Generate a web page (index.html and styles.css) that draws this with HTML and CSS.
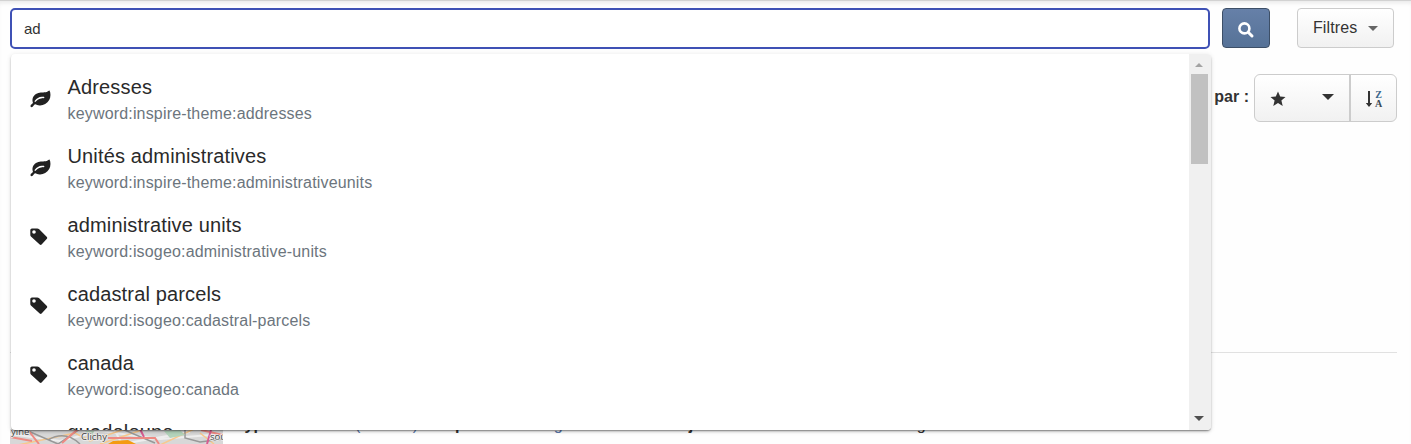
FILE: index.html
```html
<!DOCTYPE html>
<html lang="fr">
<head>
<meta charset="utf-8">
<title>Recherche</title>
<link rel="stylesheet" href="styles.css">
</head>
<body>
<svg class="defs" aria-hidden="true">
  <symbol id="leaf" viewBox="0 0 21 18"><path fill-rule="evenodd" d="M19.5 .5C20.8 3 20.9 7 19.2 10.1C17.2 13.7 13.2 15.6 9.6 15.4C7.8 15.3 6.3 14.7 5.1 14.3C4 14.3 3 17.2 1.7 17.2C.8 17.2.3 16.4.5 15.7C.7 14.5 2.6 13.8 3 12.8C2.7 12 2.3 10.7 2.5 9.2C3 5.4 6.2 3.2 9.6 2.7C12.5 2.2 16.6 3.1 18.4 1.1C18.8.7 19.1.3 19.5.5ZM5.5 11.7C7 10.2 8.4 9 11 8.5C12.6 8.2 14.4 8.4 14.4 7.5C14.4 6.7 13 6.8 12 6.8C8.8 6.9 6.7 8.6 5 10.5C4.2 11.5 4.8 12.3 5.5 11.7Z"/></symbol>
  <symbol id="tag" viewBox="0 0 18 18"><path fill-rule="evenodd" d="M.3 2Q.3.4 1.9.4H7.2Q8.3.4 9.2 1.2L16.9 8.9Q17.7 9.8 16.9 10.7L11.6 16.5Q10.7 17.3 9.7 16.5L1.2 8.8Q.3 7.9.3 6.9ZM4 2.2A1.8 1.8 0 1 0 4 5.8A1.8 1.8 0 1 0 4 2.2Z"/></symbol>
</svg>
<main class="page">
  <header class="toolbar">
    <input class="search" type="text" value="ad">
    <button class="btn btn-search" aria-label="Rechercher">
      <svg width="18" height="18" viewBox="0 0 18 18"><circle cx="7.4" cy="7.4" r="5" fill="none" stroke="#fff" stroke-width="2.6"/><path d="M11.2 11.2L15 15" stroke="#fff" stroke-width="3" stroke-linecap="round"/></svg>
    </button>
    <button class="btn btn-filter">Filtres<span class="caret"></span></button>
  </header>
  <div class="sort">
    <span class="sort-label">Trier par :</span>
    <div class="sort-group">
      <button class="sort-key" aria-label="Critère">
        <svg width="16" height="16" viewBox="0 0 16 16"><path fill="#333" d="M8 .5L10.2 5.5L15.5 6L11.4 9.6L12.7 15L8 12.1L3.3 15L4.6 9.6L.5 6L5.8 5.5Z"/></svg>
        <span class="caret caret-dark"></span>
      </button>
      <button class="sort-dir" aria-label="Ordre">
        <svg width="8" height="18" viewBox="0 0 8 18"><path fill="#333" d="M3 1H5V13H7.2L4 17L.8 13H3Z"/></svg>
        <span class="letters"><span class="letter-z">Z</span><span>A</span></span>
      </button>
    </div>
  </div>
  <hr class="rule">
  <article class="result">
    <svg class="map" width="213" height="44" viewBox="0 0 213 44">
      <rect width="213" height="44" fill="#d8d8d8"/>
      <g fill="none" stroke-width="2">
        <path stroke="#eee" d="M0 5L50 12L90 2L150 10L213 5M104 0L112 15L180 3"/>
        <path stroke="#f9c88c" stroke-width="1.5" d="M8 16L65 4L80 12L115 0M90 15L132 1M150 16L184 0M190 4L204 15"/>
        <path stroke="#989898" stroke-width="1.5" d="M18 2L48 15L70 0M38 11Q55 1 70 15M112 0L145 14M175 0V9L190 13L213 10"/>
        <path stroke="#ee8a83" d="M18 1L29 15M0 8L22 12M52 14L68 0M98 9H145L149 15M191 1L213 6"/>
        <path stroke="#d95c91" d="M201 1L197 15M130 0L134 8"/>
      </g>
      <path fill="#b3d4bb" d="M154 2L170 1L175 6L160 9ZM75 2H84L82 8Z"/>
      <path fill="#f49b12" d="M98 15L103 12L118 11L126 15Z"/>
      <text class="map-label" x="71" y="11">Clichy</text>
      <text class="map-label" x="1" y="6">yine</text>
      <text class="map-label" x="200" y="11">sou</text>
    </svg>
    <p class="meta"><b>Type :</b> <a>Données (vecteur)</a> <b>· Propriétaire :</b> <a>Isogeo TEST</a> <b>· Mise à jour de la donnée :</b> <span class="date">Non renseigné</span></p>
  </article>
  <div class="panel">
    <ul class="options">
      <li class="option"><svg class="icon leaf"><use href="#leaf"/></svg><div><div class="name">Adresses</div><div class="code">keyword:inspire-theme:addresses</div></div></li>
      <li class="option"><svg class="icon leaf"><use href="#leaf"/></svg><div><div class="name">Unités administratives</div><div class="code">keyword:inspire-theme:administrativeunits</div></div></li>
      <li class="option"><svg class="icon tag"><use href="#tag"/></svg><div><div class="name">administrative units</div><div class="code">keyword:isogeo:administrative-units</div></div></li>
      <li class="option"><svg class="icon tag"><use href="#tag"/></svg><div><div class="name">cadastral parcels</div><div class="code">keyword:isogeo:cadastral-parcels</div></div></li>
      <li class="option"><svg class="icon tag"><use href="#tag"/></svg><div><div class="name">canada</div><div class="code">keyword:isogeo:canada</div></div></li>
      <li class="option"><svg class="icon tag"><use href="#tag"/></svg><div><div class="name">guadeloupe</div><div class="code">keyword:isogeo:guadeloupe</div></div></li>
    </ul>
    <div class="scrollbar"><span class="arrow-up"></span><span class="thumb"></span><span class="arrow-down"></span></div>
  </div>
</main>
</body>
</html>
```
FILE: styles.css
```css
* { box-sizing: border-box; }
html, body { height: 100%; overflow: hidden; }
body { margin: 0; font-family: "Liberation Sans", Arial, sans-serif; color: #333; background: #fefefe; }
button { font: inherit; padding: 0; color: #333; }
.defs { display: none; }
.page { position: relative; height: 444px; overflow: hidden; padding: 7px 14px 0 10px; border-top: 1px solid #d2d2d2; box-shadow: inset 0 4px 4px -2px #e9e9e9; }
.toolbar { display: flex; height: 41px; }
.search { width: 1200px; height: 41px; padding: 0 12px; border: 2px solid #3f51b5; border-radius: 5px; outline: 0; background: #fff; color: #333; font: 15px "Liberation Sans", Arial, sans-serif; }
.btn { display: flex; align-items: center; height: 40px; border-radius: 4px; }
.btn-search { width: 48px; margin-left: 12px; padding: 4px 1px 0 0; justify-content: center; border: 1px solid #3d4f67; background: linear-gradient(#6680a8, #567297); }
.btn-filter { width: 97px; margin-left: 27px; padding: 0 15px; font-size: 16px; letter-spacing: .1px; justify-content: space-between; border: 1px solid #ccc; background: linear-gradient(#fff, #f1f1f1); }
.caret { border: 5px solid transparent; border-top-color: #666; border-bottom: 0; margin-top: 1px; }
.caret-dark { border-width: 6px 6px 0; border-top-color: #333; }
.sort { display: flex; justify-content: flex-end; height: 48px; margin-top: 25px; }
.sort-label { font-size: 16px; font-weight: 700; line-height: 18px; margin: 14px 5px 0 0; }
.sort-group { display: flex; width: 143px; border: 1px solid #ccc; border-radius: 6px; background: linear-gradient(#fff, #f1f1f1); overflow: hidden; }
.sort-key, .sort-dir { display: flex; align-items: center; border: 0; background: none; }
.sort-key { width: 96px; padding: 1px 15px 0 15px; justify-content: space-between; border-right: 2px solid #ccc; }
.sort-key .caret { margin: 0 0 3px; }
.sort-dir { flex: 1; justify-content: center; gap: 2px; padding-top: 2px; }
.letters { display: flex; flex-direction: column; font: 700 10px/9px "Liberation Serif", serif; color: #3b4a55; }
.letter-z { color: #39658a; }
.rule { width: 100%; height: 1px; margin: 230px 0 0; border: 0; background: #e1e1e1; }
.result { display: flex; gap: 21px; margin-top: 75px; }
.map { flex: none; margin-top: 1px; }
.map-label { font: 9.5px "Open Sans", sans-serif; fill: #444; stroke: #eee; stroke-width: 1.5px; paint-order: stroke; }
.meta { margin: -12px 0 0 -8px; font-size: 16px; line-height: 18px; white-space: nowrap; color: #333; }
.meta a { color: #5977ac; }
.meta a + b { margin-left: -4px; }
.date { letter-spacing: .4px; }
.panel { position: absolute; top: 53px; left: 10.5px; display: flex; width: 1200px; height: 376px; overflow: hidden; border-radius: 4px; background: #fff; box-shadow: 0 2px 3px -1px rgba(0,0,0,.35), 0 1px 1px rgba(0,0,0,.2), 0 1px 5px rgba(0,0,0,.12); }
.options { flex: 1; margin: 0; padding: 10px 0 0; list-style: none; }
.option { display: flex; align-items: center; height: 69px; padding-left: 19px; }
.icon { flex: none; fill: #212121; }
.leaf { width: 21px; height: 18px; margin-right: 17px; }
.tag { width: 18px; height: 18px; margin-right: 20px; }
.name { font-size: 20px; line-height: 28px; margin-top: 2px; color: #2a2a2a; letter-spacing: .15px; }
.code { font-size: 16px; line-height: 25px; color: #6c757d; letter-spacing: .17px; }
.scrollbar { display: flex; flex-direction: column; align-items: center; width: 22px; padding: 9px 3px 9px 2px; background: #f0f0f0; }
.arrow-up { border: 4px solid transparent; border-top: 0; border-bottom-color: #a3a3a3; }
.thumb { flex: none; width: 17px; height: 90px; margin-top: 7px; background: #c1c1c1; }
.arrow-down { margin-top: auto; border: 5px solid transparent; border-bottom: 0; border-top-color: #505050; }
```
